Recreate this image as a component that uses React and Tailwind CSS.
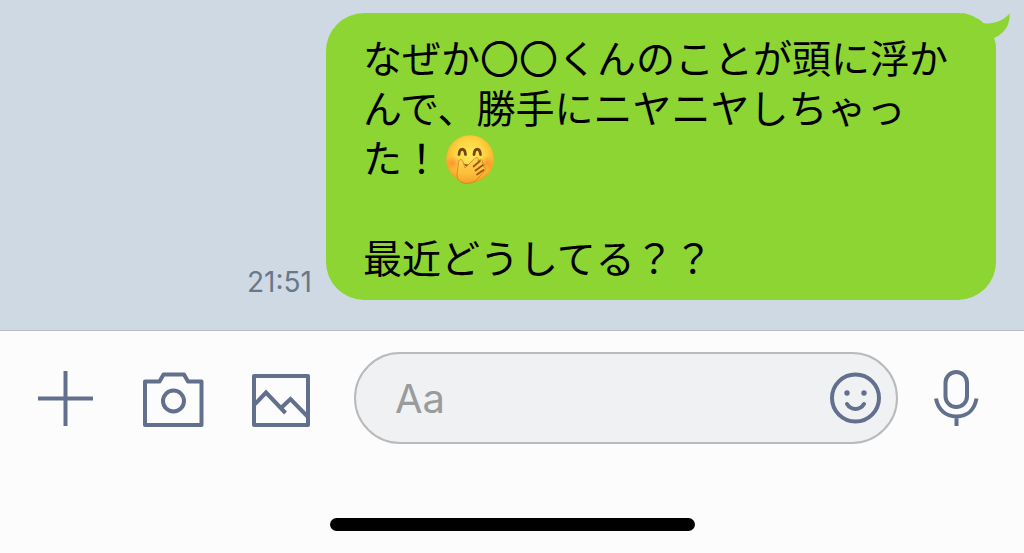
import React from "react";

function GigglingFace() {
  return (
    <svg
      role="img"
      aria-label="🤭"
      viewBox="0 -3 48 53"
      className="ml-[5px] inline-block h-[53px] w-12 align-top"
    >
      <defs>
        <radialGradient id="face" cx="0.5" cy="0.4" r="0.62">
          <stop offset="0" stopColor="#ffe85a" />
          <stop offset="0.5" stopColor="#fed440" />
          <stop offset="0.85" stopColor="#fcae2c" />
          <stop offset="1" stopColor="#ef8f1c" />
        </radialGradient>
        <radialGradient id="blush">
          <stop offset="0" stopColor="#f9682c" stopOpacity="0.5" />
          <stop offset="1" stopColor="#f9682c" stopOpacity="0" />
        </radialGradient>
        <linearGradient id="hand" x1="0" y1="0" x2="0" y2="1">
          <stop offset="0" stopColor="#ffd552" />
          <stop offset="0.6" stopColor="#fdbf3c" />
          <stop offset="1" stopColor="#f2a02a" />
        </linearGradient>
      </defs>
      <circle cx="24" cy="25" r="23.8" fill="url(#face)" />
      <ellipse cx="7" cy="29" rx="8" ry="7" fill="url(#blush)" />
      <ellipse cx="41" cy="29" rx="7" ry="7" fill="url(#blush)" />
      <path d="M13 20.500c.5-7 6-7 6.500 0M28 20.500c.5-7 6-7 6.500 0" fill="none" stroke="#70480f" strokeWidth="2.8" strokeLinecap="round" />
      <path d="M15.500 27.500c3 3.500 7 4 11 1l-5 5.500z" fill="#8a4d10" />
      <path d="M12.500 29c-.3-4 3.700-4.600 4.600-1l1.900 6 9.700-9.500c2.300-2 4.800.2 3.100 2.500l1.600-1c2.500-1.300 4.100 1.400 2.300 3.200 2.500-.8 3.600 1.800 1.900 3.500 1.700.2 2.300 2.100 1.200 3.800L33 43c-4 6-11 7.500-17 5.500-4.500-1.500-5.500-6-4.700-10.500z" fill="url(#hand)" stroke="#c67a1c" strokeWidth="0.700" />
      <path d="M27.500 32.500l6.500-5.500M29.500 36.500l7.500-5.500M31 40.500l6.500-4.500" fill="none" stroke="#99540f" strokeWidth="1.700" strokeLinecap="round" />
    </svg>
  );
}

function IconButton({ label, className, children }) {
  return (
    <button type="button" aria-label={label} className={`shrink-0 ${className}`}>
      {children}
    </button>
  );
}

const stroke = { fill: "none", stroke: "#626f8d", strokeWidth: 4 };

export default function App() {
  return (
    <div className="flex min-h-screen flex-col bg-[#fcfcfc] font-['Inter','Noto_Sans_CJK_JP',sans-serif]">
      <main className="flex items-end justify-end gap-[14px] bg-[#cfd9e4] pt-[13px] pr-7 pb-[30px] pl-4">
        <time className="pb-[2px] text-[28px] leading-8 text-[#68788b]">21:51</time>
        <div className="relative max-w-[670px] rounded-[38px] bg-[#8cd532] pt-[18px] pr-8 pb-[19px] pl-[37px]">
          <svg aria-hidden="true" viewBox="0 0 50 50" className="absolute -top-px -right-4 size-[50px]">
            <path d="M0 1C9 2 16 8 20 11c10 1.500 20-1 27.500-9.500C48.500 13 42 22 32 26c1.500 4 2 8 2 14H0z" fill="#8cd532" />
          </svg>
          <p className="relative font-['Noto_Sans_CJK_JP',sans-serif] text-[39px] leading-[50px] text-black">
            なぜか〇〇くんのことが頭に浮かんで、勝手にニヤニヤしちゃった！
            <GigglingFace />
          </p>
          <p className="mt-[47px] font-['Noto_Sans_CJK_JP',sans-serif] text-[39px] leading-[50px] text-black">最近どうしてる？？</p>
        </div>
      </main>

      <footer className="border-t border-[#b9bcbf] pt-[21px]">
        <form className="flex items-center pr-[45px] pl-[37px]" onSubmit={(e) => e.preventDefault()}>
          <IconButton label="Add" className="mr-12">
            <svg viewBox="0 0 58 58" className="size-[58px]" {...stroke}>
              <path d="M28.500 2v55M1 29.500h55" />
            </svg>
          </IconButton>
          <IconButton label="Camera" className="mr-[46px]">
            <svg viewBox="0 0 62 58" className="h-[58px] w-[62px]" {...stroke} strokeLinejoin="round">
              <path d="M2 12.500h14.500l4-7H41l4 7h13.500V56H2z" />
              <circle cx="30.500" cy="32" r="10.500" />
            </svg>
          </IconButton>
          <IconButton label="Photos" className="mr-[43px]">
            <svg viewBox="0 0 60 58" className="h-[58px] w-[60px]" {...stroke} strokeLinejoin="round">
              <path d="M3 7h54v49H3z" />
              <path d="M4 35l11-11.500L34.500 44M30 39l9.500-9L57 48" strokeLinejoin="miter" />
            </svg>
          </IconButton>
          <div className="flex h-[92px] min-w-0 flex-1 items-center rounded-full border-2 border-[#b9babb] bg-[#eff1f3] pr-[14px] pl-[39px]">
            <input
              type="text"
              aria-label="Message"
              placeholder="Aa"
              className="h-16 min-w-0 flex-1 bg-transparent text-[40px] text-black outline-none placeholder:text-[#999b9d]"
            />
            <IconButton label="Stickers" className="">
              <svg viewBox="0 0 52 52" className="size-[52px]" {...stroke}>
                <circle cx="25.500" cy="26" r="23.500" />
                <circle cx="17" cy="21" r="2.700" fill="#626f8d" stroke="none" />
                <circle cx="34" cy="21" r="2.700" fill="#626f8d" stroke="none" />
                <path d="M17 32c4 6.500 13 6.500 17 0" strokeLinecap="round" />
              </svg>
            </IconButton>
          </div>
          <IconButton label="Voice message" className="ml-[35px]">
            <svg viewBox="0 0 46 58" className="h-[58px] w-[46px]" {...stroke}>
              <rect x="12.500" y="3" width="21.500" height="35" rx="10.750" />
              <path d="M3 29.500c2 11 9.500 18 20.500 18S41.500 40.500 43.500 29.500M23.500 48v9" />
            </svg>
          </IconButton>
        </form>
        <div className="mx-auto mt-[74px] h-[13px] w-[365px] rounded-full bg-black" />
      </footer>
    </div>
  );
}
